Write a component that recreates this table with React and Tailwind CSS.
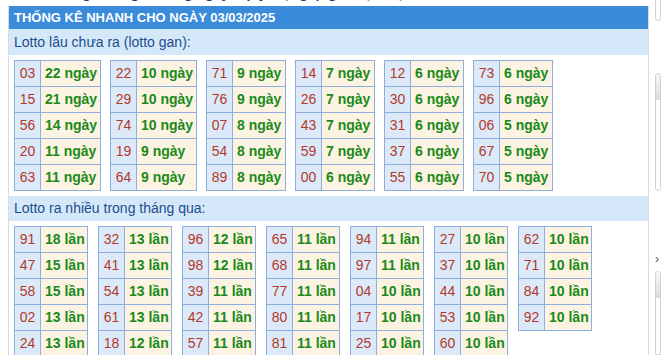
import React from "react";

const ganData = [
  [["03", "22 ngày"], ["15", "21 ngày"], ["56", "14 ngày"], ["20", "11 ngày"], ["63", "11 ngày"]],
  [["22", "10 ngày"], ["29", "10 ngày"], ["74", "10 ngày"], ["19", "9 ngày"], ["64", "9 ngày"]],
  [["71", "9 ngày"], ["76", "9 ngày"], ["07", "8 ngày"], ["54", "8 ngày"], ["89", "8 ngày"]],
  [["14", "7 ngày"], ["26", "7 ngày"], ["43", "7 ngày"], ["59", "7 ngày"], ["00", "6 ngày"]],
  [["12", "6 ngày"], ["30", "6 ngày"], ["31", "6 ngày"], ["37", "6 ngày"], ["55", "6 ngày"]],
  [["73", "6 ngày"], ["96", "6 ngày"], ["06", "5 ngày"], ["67", "5 ngày"], ["70", "5 ngày"]],
];

const nhieuData = [
  [["91", "18 lần"], ["47", "15 lần"], ["58", "15 lần"], ["02", "13 lần"], ["24", "13 lần"]],
  [["32", "13 lần"], ["41", "13 lần"], ["54", "13 lần"], ["61", "13 lần"], ["18", "12 lần"]],
  [["96", "12 lần"], ["98", "12 lần"], ["39", "11 lần"], ["42", "11 lần"], ["57", "11 lần"]],
  [["65", "11 lần"], ["68", "11 lần"], ["77", "11 lần"], ["80", "11 lần"], ["81", "11 lần"]],
  [["94", "11 lần"], ["97", "11 lần"], ["04", "10 lần"], ["17", "10 lần"], ["25", "10 lần"]],
  [["27", "10 lần"], ["37", "10 lần"], ["44", "10 lần"], ["53", "10 lần"], ["60", "10 lần"]],
  [["62", "10 lần"], ["71", "10 lần"], ["84", "10 lần"], ["92", "10 lần"]],
];

// bảng nhỏ: số | số ngày/lần (viền = nền xanh lộ qua gap 1px)
const LotoTable = ({ rows, cols }) => (
  <div className={`grid ${cols} gap-px p-px bg-[#8eaee2] self-start`}>
    {rows.map(([so, val]) => (
      <React.Fragment key={so}>
        <div className="h-[25px] bg-[#dce9f9] flex items-center justify-center text-[#b13a2a]">
          {so}
        </div>
        <div className="h-[25px] bg-[#fdf3e2] flex items-center pl-[4px] whitespace-nowrap font-bold text-[#1a8a1a]">
          {val}
        </div>
      </React.Fragment>
    ))}
  </div>
);

const SubTitle = ({ children, h }) => (
  <div className={`${h} bg-[#d5e8fa] px-[5px] flex items-center text-[14px] text-[#1c4d8e]`}>
    {children}
  </div>
);

export default function App() {
  return (
    <div
      className="w-[661px] h-[355px] overflow-hidden bg-white flex"
      style={{ fontFamily: '"Liberation Sans", Arial, sans-serif' }}
    >
      {/* cột chính */}
      <div className="w-[649px] shrink-0 pl-[8px] flex flex-col">
        <div className="h-[6px] shrink-0 overflow-hidden">
          <div className="-mt-[15px] leading-[16px] pl-[40px] text-[14px] font-bold text-[#1c3f7a] whitespace-nowrap">
            Thống kê lô gan hàng ngày · quy luật gấp giải đặc biệt
          </div>
        </div>
        <div className="border-x border-[#d8dce2] flex-1 flex flex-col">
          <div className="h-[23px] shrink-0 bg-[#3b8bdb] px-[5px] flex items-center text-[13px] font-bold text-white">
            THỐNG KÊ NHANH CHO NGÀY 03/03/2025
          </div>
          <SubTitle h="h-[26px] shrink-0">Lotto lâu chưa ra (lotto gan):</SubTitle>
          <div className="flex gap-[9px] pl-[5px] pt-[5px] pb-[5px] text-[14px]">
            {ganData.map((t, i) => (
              <LotoTable
                key={i}
                rows={t}
                cols={i < 2 ? "grid-cols-[25px_59px]" : "grid-cols-[25px_52px]"}
              />
            ))}
          </div>
          <SubTitle h="h-[25px] shrink-0">Lotto ra nhiều trong tháng qua:</SubTitle>
          <div className="flex gap-[10px] pl-[5px] pt-[5px] text-[14px]">
            {nhieuData.map((t, i) => (
              <LotoTable key={i} rows={t} cols="grid-cols-[25px_46px]" />
            ))}
          </div>
        </div>
      </div>

      {/* cột phải bị cắt */}
      <div className="flex-1 pl-[6px] flex flex-col">
        <div className="-mt-[10px] h-[31px] shrink-0 border border-[#d0d4da] rounded-[5px]" />
        <div className="mt-[52px] h-[118px] shrink-0 border border-[#d0d4da] rounded-[5px] overflow-hidden">
          <div className="h-[26px] bg-gradient-to-b from-[#f6f6f6] to-[#dcdcdc]" />
        </div>
        <div className="mt-[62px] text-[12px] leading-[12px] text-[#555]">›</div>
        <div className="mt-[6px] flex-1 border border-[#d0d4da] rounded-t-[5px] overflow-hidden">
          <div className="h-[26px] bg-gradient-to-b from-[#f6f6f6] to-[#dcdcdc]" />
        </div>
      </div>
    </div>
  );
}
